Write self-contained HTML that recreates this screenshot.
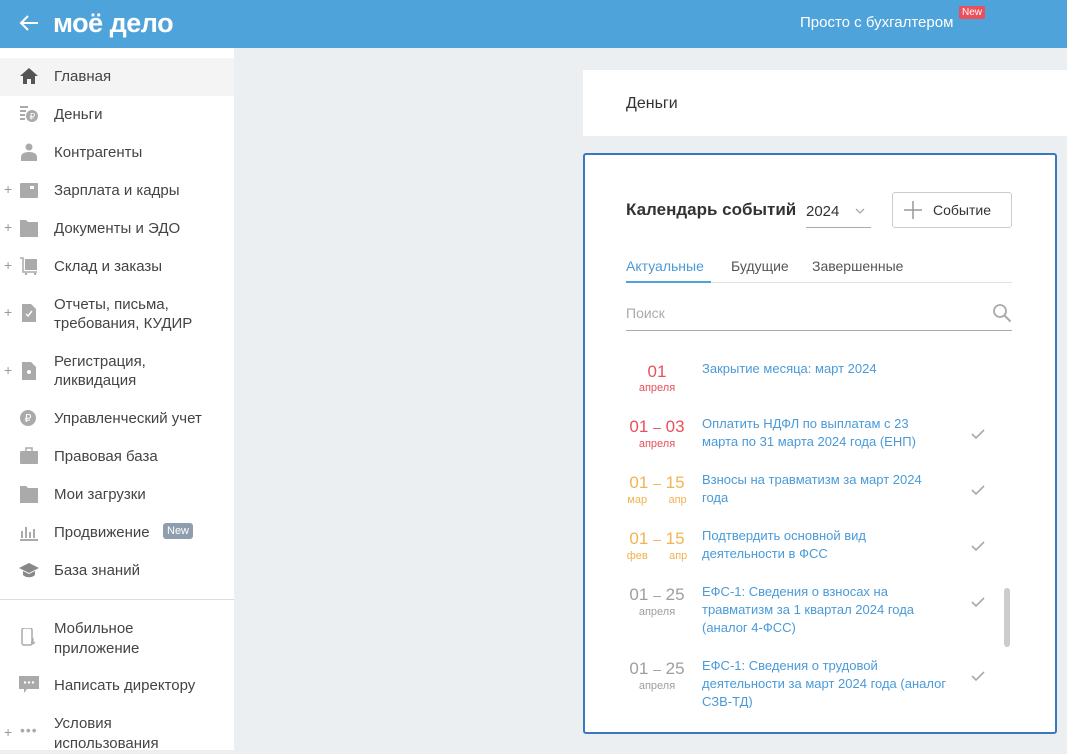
<!DOCTYPE html>
<html><head><meta charset="utf-8"><style>
*{margin:0;padding:0;box-sizing:border-box}
body{width:1067px;height:750px;overflow:hidden;background:#eceff2;font-family:"Liberation Sans",sans-serif;position:relative}
.a{position:absolute;white-space:nowrap}
#hdr{position:absolute;left:0;top:0;width:1067px;height:48px;background:#4fa3db}
#side{position:absolute;left:0;top:48px;width:234px;height:702px;background:#fff}
.it{position:absolute;left:54px;font-size:15px;color:#444;line-height:19px}
.ic{position:absolute;left:19px;width:20px;height:18px}
.pl{position:absolute;left:4px;font-size:14px;color:#999}
.d{position:absolute;left:626px;width:62px;text-align:center;font-size:17px;line-height:20px}
.d span.m{display:block;font-size:11px;line-height:12px}
.t{position:absolute;left:702px;font-size:13px;line-height:18px;color:#4a9ad8;white-space:nowrap}
.ck{position:absolute;left:971px;width:14px;height:10px}
.r{color:#e8505b}.o{color:#f2b350}.g{color:#9e9e9e}
</style></head><body>
<div id="hdr">
<svg class="a" style="left:18px;top:14px" width="22" height="18" viewBox="0 0 22 18"><path d="M20 9H3M10 2L3 9l7 7" stroke="#fff" stroke-width="2" fill="none"/></svg>
<div class="a" style="left:53px;top:8px;font-size:27px;font-weight:bold;color:#fff;letter-spacing:-0.5px">моё дело</div>
<div class="a" style="left:800px;top:14px;font-size:15px;color:#fff">Просто с бухгалтером</div>
<div class="a" style="left:959px;top:6px;background:#e8505b;color:#fff;font-size:10px;padding:1px 3px;border-radius:2px">New</div>
</div>
<div id="side">
<div class="a" style="left:0;top:10px;width:234px;height:38px;background:#f4f4f4"></div>
<div class="a" style="left:0;top:551px;width:234px;height:1px;background:#ddd"></div>
</div>
<svg class="ic" style="top:67px" viewBox="0 0 20 18"><path d="M10 1L1 9h3v8h4v-5h4v5h4V9h3z" fill="#555"/></svg>
<svg class="ic" style="top:105px" viewBox="0 0 20 18"><rect x="1" y="1" width="8" height="2" fill="#aaa"/><rect x="1" y="5" width="6" height="2" fill="#aaa"/><rect x="1" y="9" width="5" height="2" fill="#aaa"/><rect x="1" y="13" width="5" height="2" fill="#aaa"/><circle cx="13" cy="11" r="6" fill="#aaa"/><text x="10.5" y="14.5" font-size="9" fill="#fff" font-family="Liberation Sans">₽</text></svg>
<svg class="ic" style="top:143px" viewBox="0 0 20 18"><circle cx="10" cy="4" r="3.5" fill="#aaa"/><path d="M2 18v-4c0-3 3-5 8-5s8 2 8 5v4z" fill="#aaa"/></svg>
<svg class="ic" style="top:181px" viewBox="0 0 20 18"><rect x="1" y="2" width="18" height="15" rx="1" fill="#aaa"/><rect x="11" y="5" width="4" height="3" fill="#fff"/></svg>
<svg class="ic" style="top:219px" viewBox="0 0 20 18"><path d="M1 1h6l2 2h10v15H1z" fill="#aaa"/></svg>
<svg class="ic" style="top:257px" viewBox="0 0 20 18"><path d="M1 1h3v14h14" stroke="#aaa" stroke-width="1.5" fill="none"/><rect x="6" y="2" width="12" height="11" fill="#aaa"/><circle cx="7" cy="17" r="1.2" fill="#aaa"/><circle cx="16" cy="17" r="1.2" fill="#aaa"/></svg>
<svg class="ic" style="top:304px" viewBox="0 0 20 18"><path d="M3 0h9l5 5v13H3z" fill="#aaa"/><path d="M7 10l2 2 4-5" stroke="#fff" stroke-width="1.5" fill="none"/></svg>
<svg class="ic" style="top:362px" viewBox="0 0 20 18"><path d="M3 0h9l5 5v13H3z" fill="#aaa"/><circle cx="10" cy="10" r="2" fill="#fff"/></svg>
<svg class="ic" style="top:409px" viewBox="0 0 20 18"><circle cx="9" cy="9" r="8" fill="#aaa"/><text x="5.5" y="13" font-size="11" fill="#fff" font-family="Liberation Sans">₽</text></svg>
<svg class="ic" style="top:447px" viewBox="0 0 20 18"><rect x="1" y="4" width="18" height="13" rx="1" fill="#aaa"/><rect x="7" y="1" width="6" height="4" fill="none" stroke="#aaa" stroke-width="1.5"/></svg>
<svg class="ic" style="top:485px" viewBox="0 0 20 18"><path d="M1 1h6l2 2h10v15H1z" fill="#aaa"/></svg>
<svg class="ic" style="top:523px" viewBox="0 0 20 18"><path d="M1 17h18M3 15V8M7 15V4M11 15V9M15 15V6" stroke="#aaa" stroke-width="2"/></svg>
<svg class="ic" style="top:561px" viewBox="0 0 20 18"><path d="M10 2L0 7l10 5 10-5z" fill="#888"/><path d="M4 10v4c3 3 9 3 12 0v-4l-6 3z" fill="#888"/></svg>
<svg class="ic" style="top:628px" viewBox="0 0 20 18"><rect x="3" y="0" width="10" height="17" rx="2" fill="none" stroke="#aaa" stroke-width="1.5"/><path d="M14 10v6M12 14l2 2 2-2" stroke="#aaa" stroke-width="1.2" fill="none"/></svg>
<svg class="ic" style="top:676px" viewBox="0 0 20 18"><path d="M0 0h20v13H8l-3 4v-4H0z" fill="#aaa"/><circle cx="6" cy="6.5" r="1.2" fill="#fff"/><circle cx="10" cy="6.5" r="1.2" fill="#fff"/><circle cx="14" cy="6.5" r="1.2" fill="#fff"/></svg>
<div class="a" style="left:20px;top:722px;font-size:14px;color:#aaa;letter-spacing:1px">•••</div>
<div class="pl" style="top:181px">+</div><div class="pl" style="top:219px">+</div><div class="pl" style="top:257px">+</div><div class="pl" style="top:304px">+</div><div class="pl" style="top:362px">+</div><div class="pl" style="top:724px">+</div>
<div class="it" style="top:67px">Главная</div>
<div class="it" style="top:105px">Деньги</div>
<div class="it" style="top:143px">Контрагенты</div>
<div class="it" style="top:181px">Зарплата и кадры</div>
<div class="it" style="top:219px">Документы и ЭДО</div>
<div class="it" style="top:257px">Склад и заказы</div>
<div class="it" style="top:295px">Отчеты, письма,<br>требования, КУДИР</div>
<div class="it" style="top:352px">Регистрация,<br>ликвидация</div>
<div class="it" style="top:409px">Управленческий учет</div>
<div class="it" style="top:447px">Правовая база</div>
<div class="it" style="top:485px">Мои загрузки</div>
<div class="it" style="top:523px">Продвижение</div>
<div class="a" style="left:163px;top:523px;background:#8f9eae;color:#fff;font-size:11px;padding:2px 4px;border-radius:3px">New</div>
<div class="it" style="top:561px">База знаний</div>
<div class="it" style="top:619px;line-height:20px">Мобильное<br>приложение</div>
<div class="it" style="top:676px">Написать директору</div>
<div class="it" style="top:714px;line-height:20px">Условия<br>использования</div>

<div class="a" style="left:583px;top:70px;width:484px;height:66px;background:#fff"></div>
<div class="a" style="left:626px;top:95px;font-size:16px;color:#333">Деньги</div>
<div class="a" style="left:583px;top:153px;width:474px;height:581px;background:#fff;border:2px solid #3a78bd;border-radius:3px"></div>
<div class="a" style="left:626px;top:200px;font-size:17px;font-weight:bold;color:#333">Календарь событий</div>
<div class="a" style="left:806px;top:203px;font-size:15px;color:#333">2024</div>
<svg class="a" style="left:855px;top:208px" width="10" height="6"><path d="M1 1l4 4 4-4" stroke="#aaa" stroke-width="1.3" fill="none"/></svg>
<div class="a" style="left:806px;top:227px;width:65px;height:1px;background:#aaa"></div>
<div class="a" style="left:892px;top:192px;width:120px;height:36px;border:1px solid #ccc;border-radius:3px"></div>
<svg class="a" style="left:904px;top:201px" width="18" height="18"><path d="M9 0v18M0 9h18" stroke="#999" stroke-width="1.5"/></svg>
<div class="a" style="left:933px;top:202px;font-size:14px;color:#333">Событие</div>
<div class="a" style="left:626px;top:258px;font-size:14px;color:#4a9ad8">Актуальные</div>
<div class="a" style="left:731px;top:258px;font-size:14px;color:#555">Будущие</div>
<div class="a" style="left:812px;top:258px;font-size:14px;color:#555">Завершенные</div>
<div class="a" style="left:626px;top:282px;width:386px;height:1px;background:#e2e2e2"></div>
<div class="a" style="left:626px;top:281px;width:85px;height:2px;background:#4fa3db"></div>
<div class="a" style="left:626px;top:305px;font-size:14px;color:#aaa">Поиск</div>
<svg class="a" style="left:992px;top:303px" width="20" height="20"><circle cx="8" cy="8" r="6" stroke="#aaa" stroke-width="1.8" fill="none"/><path d="M12.5 12.5l6 6" stroke="#aaa" stroke-width="2"/></svg>
<div class="a" style="left:626px;top:330px;width:386px;height:1px;background:#aaa"></div>

<div class="d r" style="top:362px">01<span class="m">апреля</span></div>
<div class="t" style="top:360px">Закрытие месяца: март 2024</div>
<div class="d r" style="top:417px">01 <small>–</small> 03<span class="m">апреля</span></div>
<div class="t" style="top:415px">Оплатить НДФЛ по выплатам с 23<br>марта по 31 марта 2024 года (ЕНП)</div>
<div class="d o" style="top:473px">01 <small>–</small> 15<span class="m">мар &nbsp; &nbsp; &nbsp; апр</span></div>
<div class="t" style="top:471px">Взносы на травматизм за март 2024<br>года</div>
<div class="d o" style="top:529px">01 <small>–</small> 15<span class="m">фев &nbsp; &nbsp; &nbsp; апр</span></div>
<div class="t" style="top:527px">Подтвердить основной вид<br>деятельности в ФСС</div>
<div class="d g" style="top:585px">01 <small>–</small> 25<span class="m">апреля</span></div>
<div class="t" style="top:583px">ЕФС-1: Сведения о взносах на<br>травматизм за 1 квартал 2024 года<br>(аналог 4-ФСС)</div>
<div class="d g" style="top:659px">01 <small>–</small> 25<span class="m">апреля</span></div>
<div class="t" style="top:657px;height:51px;overflow:hidden">ЕФС-1: Сведения о трудовой<br>деятельности за март 2024 года (аналог<br>СЗВ-ТД)</div>
<svg class="ck" style="top:429px" viewBox="0 0 14 10"><path d="M1 5l4 4 8-8" stroke="#aaa" stroke-width="1.6" fill="none"/></svg>
<svg class="ck" style="top:485px" viewBox="0 0 14 10"><path d="M1 5l4 4 8-8" stroke="#aaa" stroke-width="1.6" fill="none"/></svg>
<svg class="ck" style="top:541px" viewBox="0 0 14 10"><path d="M1 5l4 4 8-8" stroke="#aaa" stroke-width="1.6" fill="none"/></svg>
<svg class="ck" style="top:597px" viewBox="0 0 14 10"><path d="M1 5l4 4 8-8" stroke="#aaa" stroke-width="1.6" fill="none"/></svg>
<svg class="ck" style="top:671px" viewBox="0 0 14 10"><path d="M1 5l4 4 8-8" stroke="#aaa" stroke-width="1.6" fill="none"/></svg>
<div class="a" style="left:1004px;top:588px;width:6px;height:59px;background:#ccc;border-radius:3px"></div>
</body></html>
